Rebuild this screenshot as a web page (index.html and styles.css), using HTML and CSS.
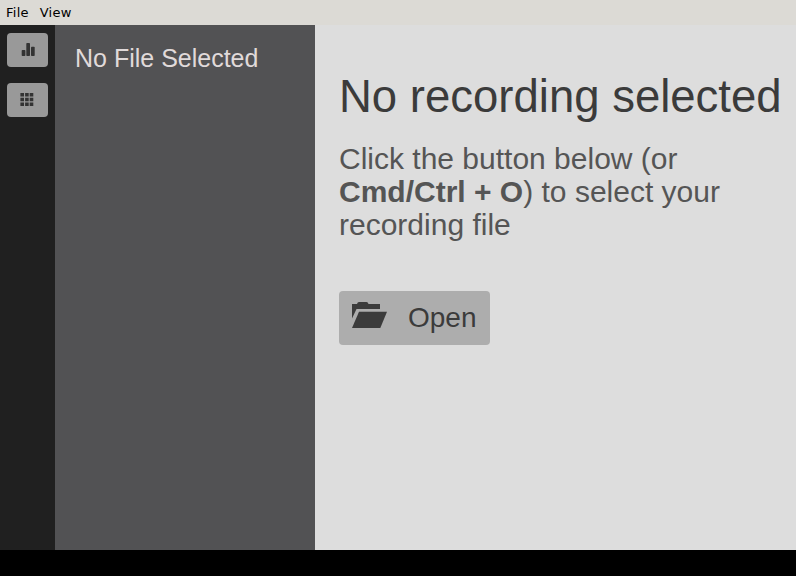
FILE: index.html
```html
<!DOCTYPE html>
<html lang="en">
<head>
<meta charset="utf-8">
<title>Recordings</title>
<link rel="stylesheet" href="styles.css">
</head>
<body>
<nav class="menubar"><span>File</span><span>View</span></nav>
<div class="app">
<aside class="rail">
<button class="tool" aria-label="Chart"><svg width="15" height="14" viewBox="0 0 15 14"><rect x="1.700" y="7" width="3.700" height="6" rx=".8"/><rect x="6.300" y="0" width="3.700" height="13" rx=".8"/><rect x="11" y="3.700" width="3.700" height="9.300" rx=".8"/></svg></button>
<button class="tool" aria-label="Grid"><svg width="15" height="14" viewBox="0 0 15 14"><path d="M.4 0H4v3.600H.4zM5.100 0h3.600v3.600H5.100zM9.700 0h3.600v3.600H9.700zM.4 4.700H4v3.600H.4zM5.100 4.700h3.600v3.600H5.100zM9.700 4.700h3.600v3.600H9.700zM.4 9.400H4V13H.4zM5.100 9.400h3.600V13H5.100zM9.700 9.400h3.600V13H9.700z"/></svg></button>
</aside>
<section class="sidebar"><h2>No File Selected</h2></section>
<main class="content">
<h1>No recording selected</h1>
<p>Click the button below (or <b>Cmd/Ctrl + O</b>) to select your recording file</p>
<button class="open"><svg width="35" height="26" viewBox="0 0 35 26"><path d="M0 16.500V2h5Q5.500 0 7 0h7.500Q16 0 16.500 2H28v5H4.500z"/><path d="M7 9.700H35L28.300 26H0z"/></svg><span>Open</span></button>
</main>
</div>
</body>
</html>
```
FILE: styles.css
```css
* { box-sizing: border-box; }
body { margin: 0; height: 576px; background: #000; font-family: "Liberation Sans", Arial, sans-serif; overflow: hidden; }
.menubar { height: 25px; display: flex; gap: 11px; padding: 0 6px; background: #dcdad5; color: #000; font: 13px/25px "DejaVu Sans", sans-serif; letter-spacing: .25px; }
.app { height: 525px; display: flex; }
.rail { width: 55px; background: #202020; padding: 8px 7px; display: flex; flex-direction: column; gap: 16px; }
.tool { width: 41px; height: 34px; padding: 0; border: 0; border-radius: 4px; background: #999; display: flex; align-items: center; justify-content: center; fill: #333; }
.sidebar { width: 260px; background: #525254; padding: 19px 20px; }
h2 { margin: 0; font-size: 25px; line-height: 29px; font-weight: 400; color: #e0dada; white-space: nowrap; }
.content { width: 481px; background: #ddd; padding: 45px 0 0 24px; }
h1 { margin: 0; font-size: 45.5px; line-height: 54px; font-weight: 400; color: #3b3b3b; white-space: nowrap; }
p { margin: 18px 0 50px; width: 410px; font-size: 30px; line-height: 33px; color: #555; }
.open { width: 151px; height: 54px; border: 0; border-radius: 4px; padding: 0 13px; background: #adadad; display: flex; align-items: center; gap: 21px; font: 28px/32px "Liberation Sans", Arial, sans-serif; color: #3b3b3b; fill: #3b3b3b; }
.open svg { margin-bottom: 6px; }
```
